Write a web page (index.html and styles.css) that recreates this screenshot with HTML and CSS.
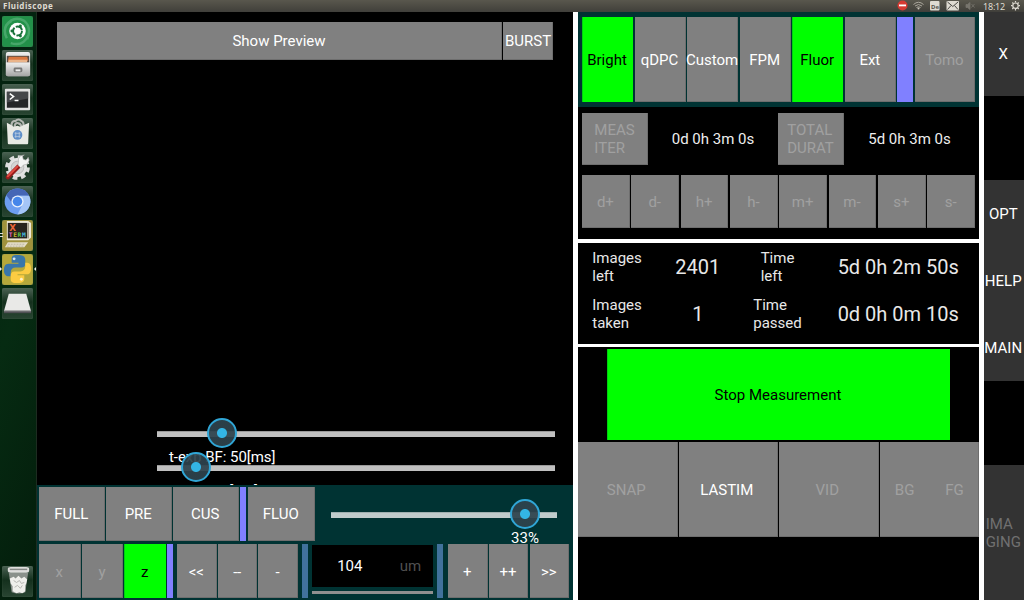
FILE: index.html
```html
<!DOCTYPE html>
<html lang="en">
<head>
<meta charset="utf-8">
<title>Fluidiscope</title>
<link rel="stylesheet" href="styles.css">
</head>
<body>
<header class="topbar">
  <span class="title">Fluidiscope</span>
  <svg class="tray" width="130" height="12" viewBox="0 0 130 12">
    <circle cx="8.500" cy="5.500" r="5" fill="#d63a32"/><rect x="5" y="4.500" width="7" height="1.800" fill="#fff"/>
    <g fill="none" stroke="#aaa69c" stroke-width="1"><path d="M19.500 4.500Q24.500 0 29.500 4.500"/><path d="M21 6Q24.500 3 28 6"/><path d="M22.500 7.500Q24.500 6 26.500 7.500"/></g><circle cx="24.500" cy="8.500" r="1" fill="#ccc8bd"/>
    <rect x="36" y="1" width="9.500" height="9.500" rx="1" fill="#dfdbd2"/><text x="37" y="8.500" class="lang">De</text>
    <rect x="52.500" y="1" width="12.500" height="9.500" rx="1" fill="#dfdbd2"/><path d="M53.500 2l5.300 4.500L64 2M53.500 9.500l3.500-4M64 9.500l-3.500-4" fill="none" stroke="#4a4944" stroke-width="1"/>
    <path d="M72 4.500h1.500l2.500-2v7l-2.500-2H72zM77.500 4l3 3.500M80.500 4l-3 3.500" fill="#77756d" stroke="#77756d" stroke-width=".8"/>
    <g stroke="#dfdbd2" fill="none"><circle cx="121.500" cy="5.700" r="2.700" stroke-width="1.200"/><path d="M121.500 1v1.500M121.500 9v1.500M117 5.700h1.500M124.500 5.700h1.500M118.300 2.500l1 1M123.700 8l1 1M124.700 2.500l-1 1M118.300 9l1-1" stroke-width="1.200"/></g>
  </svg>
  <span class="clock">18:12</span>
</header>
<div class="desktop">
  <nav class="launcher">
    <div class="app dash"><svg viewBox="0 0 32 32"><path d="M4 10Q12-1 23 5Q31 12 26 24M5 23Q-1 11 10 5M9 28Q22 32 27 20" fill="none" stroke="#76c393" stroke-width="2.500" opacity=".45"/><circle cx="16" cy="15.500" r="8.500" fill="#fff"/><circle cx="16" cy="15.500" r="4.600" fill="none" stroke="#18713a" stroke-width="2" stroke-dasharray="8.200 1.430"/><g fill="#18713a"><circle cx="10.200" cy="15.500" r="1.500"/><circle cx="19" cy="10.300" r="1.500"/><circle cx="19" cy="20.700" r="1.500"/></g></svg></div>
    <div class="app"><svg viewBox="0 0 32 32"><defs><linearGradient id="silver" x1="0" y1="0" x2="0" y2="1"><stop offset="0" stop-color="#eee"/><stop offset="1" stop-color="#a5a5a5"/></linearGradient></defs><rect x="4" y="2" width="25" height="25" rx="2" fill="url(#silver)"/><path d="M5 6h23v7H5z" fill="#594c45"/><path d="M7 7h19l1 4H6z" fill="#d8763f"/><path d="M7 10h19v3H6z" fill="#eab48a"/><path d="M4 13h25v12q0 2-2 2H6q-2 0-2-2z" fill="url(#silver)"/><rect x="12" y="18" width="9" height="5" rx="1.500" fill="#777"/><path d="M14 20h5v2h-5z" fill="#eee"/></svg></div>
    <div class="app"><svg viewBox="0 0 32 32"><rect x="3" y="5" width="26" height="22" rx="1" fill="#e2e2e2"/><rect x="5" y="8" width="22" height="16.500" fill="#252628"/><path d="M5 8h22v7L5 19z" fill="#45474a"/><path d="M8 10l4 3-4 3M13 17h4" fill="none" stroke="#fff" stroke-width="1.500"/></svg></div>
    <div class="app"><svg viewBox="0 0 32 32"><path d="M10 9Q9 3 14 3Q17 0 20 3Q23 4 22 9M13 10Q13 4 17 5.500Q20 6 20 10" fill="none" stroke="#b5b7b3" stroke-width="2.200"/><path d="M5 5l4 2 3 2 4-1 3 1 4-2 5-2-1 21q0 1-1 1H7q-1 0-1-1z" fill="#e9e9e4"/><circle cx="16" cy="17.500" r="5" fill="#608fc9"/><path d="M14.200 14.500v6M17.800 14.500v6M13 15.800h6M13 19.200h6" stroke="#b9cbe1" stroke-width=".8"/></svg></div>
    <div class="app"><svg viewBox="0 0 32 32"><circle cx="16" cy="16" r="11" fill="none" stroke="#ddd" stroke-width="3.500" stroke-dasharray="4.800 3.840"/><circle cx="16" cy="16" r="10" fill="#e3e3e3"/><circle cx="16" cy="16" r="6.500" fill="#d5d5d5" stroke="#bcbcbc"/><path d="M6 26L17 15" stroke="#951b1b" stroke-width="4.500" stroke-linecap="round"/><path d="M6 25L16 15" stroke="#df4b42" stroke-width="2" stroke-linecap="round"/><path d="M16.500 13.500l3 3 2.500-3 4-1 2-4-1-3-2 3-3-1-1-3 2-1.500-4 1-2 3v3z" fill="#f4f4f4" stroke="#aaa" stroke-width=".6"/></svg></div>
    <div class="app"><svg viewBox="0 0 32 32"><circle cx="16" cy="16" r="13.300" fill="#6c9df0"/><path d="M4.500 9.500A13.300 13.300 0 0 1 28 10H16L10 17z" fill="#4566b6"/><path d="M16 10h12A13.300 13.300 0 0 1 16 29.300l6-12z" fill="#a4c5f7"/><circle cx="16" cy="16" r="6.300" fill="#e8f0fd"/><circle cx="16" cy="16" r="4.900" fill="#4586ea"/></svg></div>
    <div class="app olive"><i class="pip double"></i><svg viewBox="0 0 32 32"><path d="M5 1h22l3 2v15l-3 3H5z" fill="#ede8d6"/><path d="M6 3h20v16H6z" fill="#28241e"/><path d="M27 3v16" stroke="#77725f"/><text x="7.500" y="11" class="xt">X</text><text x="7" y="17.500" class="term"><tspan fill="#ed68c3">T</tspan><tspan fill="#c5b631">E</tspan><tspan fill="#5bc647">R</tspan><tspan fill="#46bde6">M</tspan></text><path d="M6 23h21l-4 5H3z" fill="#e5dfc9"/><path d="M6 25h17M5 27h17" stroke="#aaa48f" stroke-width=".7" stroke-dasharray="2 1"/></svg></div>
    <div class="app yellow"><i class="pip"></i><i class="pip active"></i><svg viewBox="0 0 32 32"><path d="M16 1c-6 0-6 2-6 5v3h7v1H7c-4 0-5 3-5 7s2 6 5 6h2v-4c0-3 2-5 5-5h6c3 0 4-2 4-4V6c0-4-3-5-8-5z" fill="#3976aa"/><path d="M16 30c6 0 7-2 7-5v-3h-7v-1h10c3 0 4-3 4-6s-1-6-4-6h-2v4c0 3-2 5-5 5h-6c-3 0-4 2-4 4v4c0 3 2 4 7 4z" fill="#fccc42"/><circle cx="12.500" cy="5" r="1.500" fill="#d6e6f2"/><circle cx="20" cy="26" r="1.500" fill="#fff3c8"/></svg></div>
    <div class="app"><svg viewBox="0 0 32 32"><path d="M7 6h18l5 18H2z" fill="#e9e9e7"/><path d="M2 23h28v3H2z" fill="#515155"/><path d="M2 23h28v1H2z" fill="#bbb"/></svg></div>
    <div class="app trash"><svg viewBox="0 0 32 32"><path d="M7 7h20l-3 20q-7 3-14 0z" fill="#8a918b"/><path d="M6 3q0-2 3-2h16q3 0 3 2v2q0 2-3 2H9q-3 0-3-2z" fill="#dededc"/><path d="M8 3.500h18" stroke="#858885" stroke-width="1.500"/><path d="M8 13l4-2 2 2 3-3 3 3 3-2 3 3-1 4-1 2v6l-3 2-3-1-3 1-4-2v-5l-2-3z" fill="#efefeb"/><path d="M12 15l3 2 3-2 2 3 3-1M13 22l3-2 3 3 2-3" stroke="#b5b5b0" fill="none"/></svg></div>
  </nav>

  <main class="view">
    <section class="preview">
      <div class="preview-buttons"><button class="btn show">Show Preview</button><button class="btn burst">BURST</button></div>
      <div class="exposure">
        <div class="slider first"><i class="knob" style="left:65px"></i></div>
        <p class="exp-label">t-exp BF: 50[ms]</p>
        <div class="slider second"><i class="knob" style="left:39px"></i></div>
        <p class="exp-label cut">t-exp FL: 0[ms]</p>
      </div>
    </section>
    <section class="controls">
      <div class="row sizes">
        <button class="btn">FULL</button><button class="btn">PRE</button><button class="btn">CUS</button><i class="bar"></i><button class="btn">FLUO</button>
        <div class="zoom"><div class="slider"><i class="knob" style="left:194px"></i></div><span class="percent">33%</span></div>
      </div>
      <div class="row motion">
        <button class="btn off">x</button><button class="btn off">y</button><button class="btn on">z</button><i class="bar"></i><button class="btn">&lt;&lt;</button><button class="btn dashes">--</button><button class="btn">-</button><i class="bar steel"></i>
        <div class="entry"><div class="field"><span class="value">104</span><span class="unit">um</span></div><i class="line"></i></div>
        <i class="bar steel"></i><button class="btn">+</button><button class="btn">++</button><button class="btn">&gt;&gt;</button>
      </div>
    </section>
  </main>

  <aside class="panel">
    <section class="modes"><button class="btn on">Bright</button><button class="btn">qDPC</button><button class="btn">Custom</button><button class="btn">FPM</button><button class="btn on">Fluor</button><button class="btn">Ext</button><i class="bar"></i><button class="btn off">Tomo</button></section>
    <section class="timing">
      <div class="durations"><button class="btn off"><span>MEAS<br>ITER</span></button><span class="dur">0d 0h 3m 0s</span><button class="btn off"><span>TOTAL<br>DURAT</span></button><span class="dur">5d 0h 3m 0s</span></div>
      <div class="steps"><button class="btn off">d+</button><button class="btn off">d-</button><button class="btn off">h+</button><button class="btn off">h-</button><button class="btn off">m+</button><button class="btn off">m-</button><button class="btn off">s+</button><button class="btn off">s-</button></div>
    </section>
    <section class="status">
      <div class="cell"><span>Images<br>left</span></div><div class="cell big">2401</div><div class="cell"><span>Time<br>left</span></div><div class="cell big last">5d 0h 2m 50s</div>
      <div class="cell"><span>Images<br>taken</span></div><div class="cell big">1</div><div class="cell"><span>Time<br>passed</span></div><div class="cell big last">0d 0h 0m 10s</div>
    </section>
    <section class="capture">
      <button class="btn on stop">Stop Measurement</button>
      <div class="shots"><button class="btn off">SNAP</button><button class="btn">LASTIM</button><button class="btn off">VID</button><div class="btn off pair"><span>BG</span><span>FG</span></div></div>
    </section>
  </aside>

  <nav class="side">
    <button class="tab close">X</button>
    <div class="tabs"><button class="tab">OPT</button><button class="tab">HELP</button><button class="tab">MAIN</button></div>
    <button class="tab imaging"><span>IMA<br>GING</span></button>
  </nav>
</div>
</body>
</html>
```
FILE: styles.css
```css
* { box-sizing: border-box; }
body { margin: 0; width: 1024px; height: 600px; overflow: hidden; background: #000; color: #fff; font: 15px/18px Roboto, sans-serif; }
button { border: 0; padding: 0; margin: 0; font: inherit; color: inherit; }
p { margin: 0; }
.topbar { height: 12px; display: flex; position: relative; background: linear-gradient(#59574d, #403f3a); color: #dfdbd2; overflow: hidden; }
.title { padding-left: 3px; font: bold 8px/12px "Noto Sans", sans-serif; letter-spacing: .5px; }
.tray { margin-left: auto; flex: none; }
.topbar .clock { position: absolute; left: 983px; top: 1px; font: 9px/12px "Noto Sans", sans-serif; letter-spacing: -.2px; }
.lang { font: bold 6px "Noto Sans", sans-serif; fill: #55534c; }
.desktop { height: 588px; display: flex; }

.launcher { width: 37px; flex: none; padding: 4px 0 3px 2px; display: flex; flex-direction: column; gap: 3px; background: linear-gradient(110deg, #03200f, #062b12 50%, #031c0b); border-right: 1px solid #1d2b20; }
.app { width: 31px; height: 31px; flex: none; position: relative; border-radius: 2px; background: linear-gradient(#4b6253, #14301d 45%, #294532); box-shadow: inset 0 0 1px #597160; }
.app svg { width: 31px; height: 31px; display: block; }
.app.dash { background: #229149; }
.app.olive { background: #9e923c; }
.app.yellow { background: #b5a83b; }
.app.trash { margin-top: auto; }
.pip { position: absolute; left: -2px; top: 13px; border: 2px solid transparent; border-left-color: #eee; border-right: 0; }
.pip.double { width: 3px; height: 4px; border: solid #ddd; border-width: 1px 0; }
.pip.active { left: 32px; border: 2px solid transparent; border-right-color: #eee; border-left: 0; }
.xt { font: bold 9px "DejaVu Sans", sans-serif; fill: #ed6736; }
.term { font: bold 6.500px "DejaVu Sans Mono", monospace; letter-spacing: .6px; }

.btn { display: flex; align-items: center; justify-content: center; background: #808080; color: #fff; white-space: nowrap; text-align: left; box-shadow: inset -1px -1px #6e6e6e; padding-right: 1px; }
.btn.off { color: #a0a0a0; }
.btn.on { background: #0f0; color: #000; box-shadow: inset 1px 0 #00cf10; }
.btn.burst { padding-right: 0; }
.bar { background: #8080ff; flex: none; }
.bar.steel { background: #41729c; }

.view { width: 536px; flex: none; display: flex; flex-direction: column; }
.preview { height: 473px; padding: 10px 0 0 20px; overflow: hidden; display: flex; flex-direction: column; }
.preview-buttons { display: flex; gap: 1px; height: 38px; flex: none; }
.show { width: 445px; }
.burst { width: 50px; }
.exposure { margin: 371px 18px 0 100px; }
.slider { height: 6px; background: #c0c0c0; border-top: 1px solid #9a9a9a; position: relative; }
.knob { position: absolute; width: 30px; height: 30px; margin: -14px 0 0 -15px; border: 2px solid #30a6d6; border-radius: 50%; background: radial-gradient(circle, #33b5e5 0 4.500px, rgba(46, 67, 77, .93) 5.500px); }
.exp-label { height: 18px; margin: 11px 0 0 12px; letter-spacing: -.05px; }
.slider.second { margin-top: -1px; }
.second .knob { margin-top: -14.500px; }
.exp-label.cut { margin: 11px 0 0; width: 101px; text-align: right; white-space: nowrap; }
.controls { height: 115px; background: #003333; padding: 2px 5px 2px 2px; display: flex; flex-direction: column; gap: 3px; }
.row { height: 54px; display: flex; }
.sizes { gap: 1.500px; }
.sizes .btn { width: 65.500px; }
.sizes .bar { width: 6px; }
.sizes .bar + .btn { width: 67.500px; }
.zoom { width: 226px; margin-left: 14.500px; padding-top: 25px; }
.zoom .slider { background: #c0cccc; border-color: #9fb0b0; }
.zoom .knob { margin-top: -14.500px; }
.percent { display: block; width: 60px; text-align: center; margin: 11px 0 0 164px; line-height: 18px; }
.motion > * { flex: none; }
.motion .btn { width: 39.500px; margin-right: 1.200px; padding-top: 2px; }
.motion .off, .motion .on { width: 41.500px; }
.motion .bar { width: 6px; margin: 0 4px 0 0; }
.motion .steel { margin: 0 4px 0 3px; }
.dashes { letter-spacing: -.3px; }
.entry { width: 121px; padding-top: 1px; }
.field { height: 42px; background: #000; display: flex; justify-content: space-between; padding: 12px 12px 0 25px; }
.unit { color: #505050; }
.line { display: block; height: 3px; margin-top: 4px; background: #909090; }
.motion .entry + .steel { margin: 0 5px 0 4px; }

.panel { width: 411px; flex: none; background: #fff; padding: 0 5px; display: flex; flex-direction: column; }
.modes { height: 95px; background: #003333; padding: 5px 4px; display: grid; grid-template-columns: repeat(6, 51px) 16px 60px; justify-content: space-between; }
.timing { height: 132px; background: #000; padding: 6px 4px 11px; }
.durations { display: grid; grid-template-columns: 66px 130px 66px 131px; height: 52px; }
.dur { display: grid; place-items: center; color: #eee; }
.steps { margin-top: 10px; height: 53px; display: grid; grid-template-columns: repeat(8, 1fr); gap: 1.500px; }
.status { height: 101px; margin-top: 4px; padding-bottom: 6px; background: #000; color: #e8e8e8; display: grid; grid-template-columns: 78px 83.500px 76px 163.500px; grid-template-rows: 47px 47px; }
.cell { display: flex; align-items: center; justify-content: center; }
.cell.big { font-size: 20px; }
.cell.last { padding-left: 2px; }
.capture { margin-top: 3px; background: #000; flex: 1; padding-top: 2px; }
.stop { width: 343px; height: 91px; margin: 0 0 2px 29px; }
.shots { height: 95px; display: grid; grid-template-columns: repeat(4, 1fr); gap: 1px; }
.shots .btn { padding-right: 3px; }
.shots .pair { justify-content: space-around; padding-right: 0; }

.side { width: 40px; display: flex; flex-direction: column; gap: 84px; }
.tab { width: 40px; display: flex; align-items: center; justify-content: center; background: #333; padding-right: 1.500px; }
.close { height: 84px; }
.tabs { height: 201px; display: grid; grid-template-rows: repeat(3, 1fr); }
.imaging { height: 135px; color: #707070; text-align: left; }
```
